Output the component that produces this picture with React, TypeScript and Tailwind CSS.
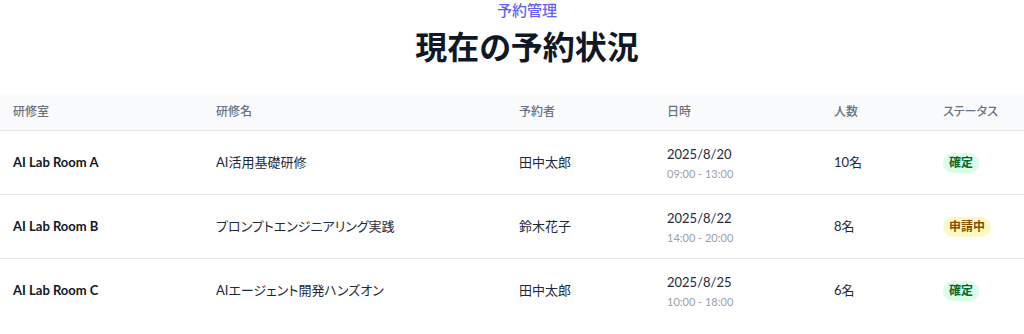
const font = { fontFamily: 'Lato, "Noto Sans CJK JP", sans-serif' };

type Status = '確定' | '申請中';

interface Reservation {
  room: string;
  course: string;
  person: string;
  date: string;
  time: string;
  count: string;
  status: Status;
}

const reservations: Reservation[] = [
  { room: 'AI Lab Room A', course: 'AI活用基礎研修', person: '田中太郎', date: '2025/8/20', time: '09:00 - 13:00', count: '10名', status: '確定' },
  { room: 'AI Lab Room B', course: 'プロンプトエンジニアリング実践', person: '鈴木花子', date: '2025/8/22', time: '14:00 - 20:00', count: '8名', status: '申請中' },
  { room: 'AI Lab Room C', course: 'AIエージェント開発ハンズオン', person: '田中太郎', date: '2025/8/25', time: '10:00 - 18:00', count: '6名', status: '確定' },
];

const headers = ['研修室', '研修名', '予約者', '日時', '人数', 'ステータス'];

const cols = 'grid grid-cols-[203px_303px_148px_167px_109px_1fr]';

const StatusBadge = ({ status }: { status: Status }) => (
  <span
    className={
      status === '確定'
        ? 'inline-flex items-center rounded-full bg-green-100 px-1.5 py-0.5 text-xs leading-4 font-semibold text-green-800'
        : 'inline-flex items-center rounded-full bg-yellow-100 px-1.5 py-0.5 text-xs leading-4 font-semibold text-yellow-800'
    }
  >
    {status}
  </span>
);

export default function App() {
  return (
    <div className="min-h-screen overflow-hidden bg-white [font-feature-settings:'palt']" style={font}>
      <div className="w-[1054px]">
        <div className="text-center">
          <p className="text-[15px] leading-5 font-medium text-indigo-500">予約管理</p>
          <h1 className="mt-[9px] text-[32px] leading-9 font-bold text-gray-900">現在の予約状況</h1>
        </div>

        <div className="mt-[29px]">
          <div className={`${cols} h-[37px] items-center border-b border-gray-200 bg-gray-50 text-xs font-medium text-gray-500`}>
            {headers.map((h) => (
              <div key={h} className="pl-[13px]">{h}</div>
            ))}
          </div>

          <div className="divide-y divide-gray-200">
            {reservations.map((r) => (
              <div key={r.room} className={`${cols} h-16 items-center text-[13px] text-gray-800`}>
                <div className="pl-[13px] font-bold text-gray-900">{r.room}</div>
                <div className="pl-[13px]">{r.course}</div>
                <div className="pl-[13px]">{r.person}</div>
                <div className="pl-[13px]">
                  <div className="leading-5">{r.date}</div>
                  <div className="mt-0.5 text-[11px] leading-4 text-gray-400">{r.time}</div>
                </div>
                <div className="pl-[13px]">{r.count}</div>
                <div className="pl-[13px]">
                  <StatusBadge status={r.status} />
                </div>
              </div>
            ))}
          </div>
        </div>
      </div>
    </div>
  );
}
